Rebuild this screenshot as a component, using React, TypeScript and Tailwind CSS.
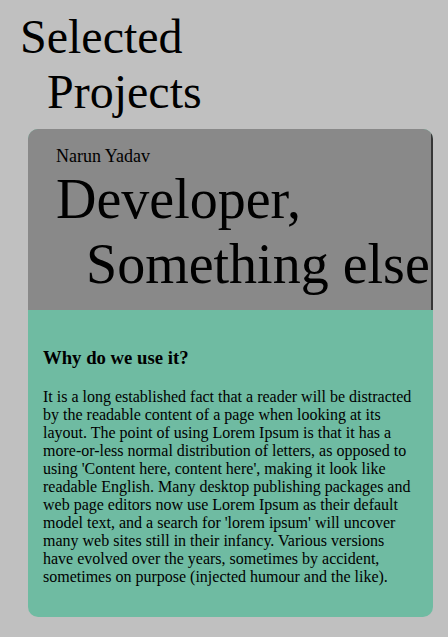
import React from "react";

export default function App() {
  return (
    <div className="min-h-[637px] bg-[#c0c0c0] font-['Liberation_Serif','Times_New_Roman',serif] text-black">
      <h1 className="pt-[9px] pb-[10px] pl-[20px] text-[48px] font-normal leading-[55px]">
        <span className="block whitespace-nowrap">Selected</span>
        <span className="block whitespace-nowrap pl-[27px]">Projects</span>
      </h1>
      <div className="ml-[28px] w-[405px] overflow-hidden rounded-[10px] bg-[#6fbba2]">
        <div className="border-r-2 border-[#363636] bg-[#898989] pl-[28px] pt-[17px] pb-[13px]">
          <p className="text-[18px] leading-[21px]">Narun Yadav</p>
          <p className="text-[56px] leading-[65px]">
            <span className="block whitespace-nowrap">Developer,</span>
            <span className="block whitespace-nowrap pl-[30px]">Something else</span>
          </p>
        </div>
        <div className="px-[15px] pt-[37px] pb-[31px]">
          <h3 className="mb-[19px] text-[18.72px] font-bold leading-[21.5px]">Why do we use it?</h3>
          <p className="text-[16px] leading-[18px]">
            It is a long established fact that a reader will be distracted by the readable content of a page when looking at its layout. The point of using Lorem Ipsum is that it has a more-or-less normal distribution of letters, as opposed to using 'Content here, content here', making it look like readable English. Many desktop publishing packages and web page editors now use Lorem Ipsum as their default model text, and a search for 'lorem ipsum' will uncover many web sites still in their infancy. Various versions have evolved over the years, sometimes by accident, sometimes on purpose (injected humour and the like).
          </p>
        </div>
      </div>
    </div>
  );
}
